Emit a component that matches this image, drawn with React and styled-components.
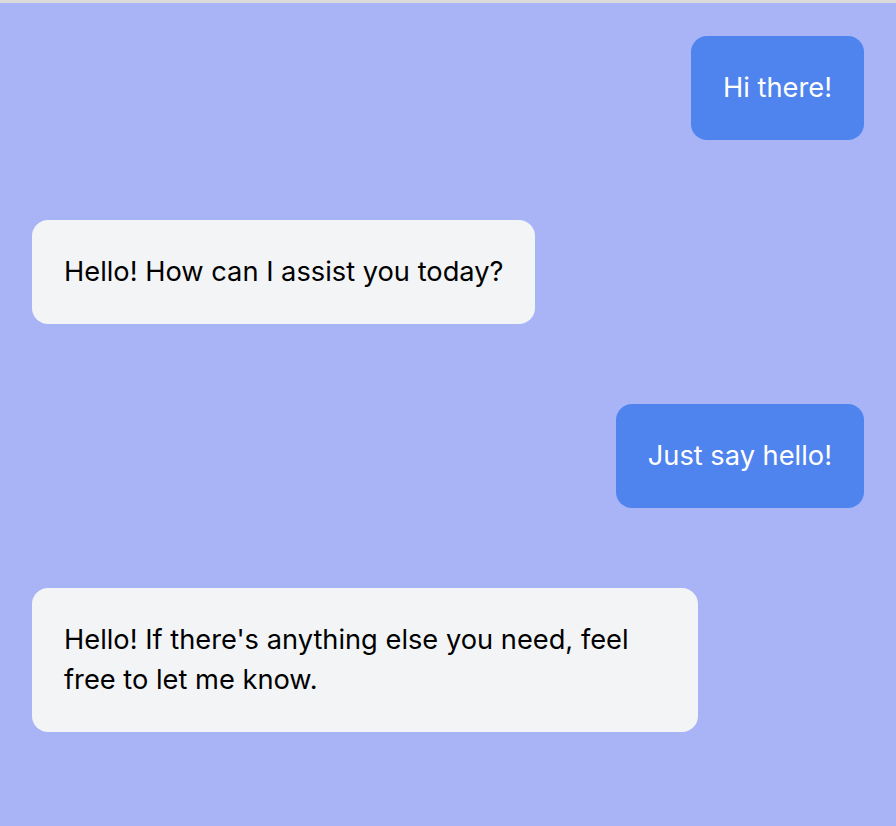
import React from 'react';
import styled, { createGlobalStyle } from 'styled-components';

const GlobalStyle = createGlobalStyle`
    html, body {
        margin: 0;
        padding: 0;
        background: #a8b4f6;
    }
    body {
        font-family: Inter, "Noto Sans", sans-serif;
    }
`

const Page = styled.div`
    min-height: 826px;
    box-sizing: border-box;
    border-top: 3px solid #dadada;
    background: #a8b4f6;
    padding: 33px 32px 32px;
    display: flex;
    flex-direction: column;
    gap: 80px;
`

const Row = styled.div`
    display: flex;
    justify-content: ${p => (p.$mine ? 'flex-end' : 'flex-start')};
`

const Bubble = styled.div`
    max-width: 80%;
    box-sizing: border-box;
    padding: 32px;
    border-radius: 16px;
    font-size: 27.25px;
    line-height: 40px;
    background: ${p => (p.$mine ? '#4f83ee' : '#f3f4f6')};
    color: ${p => (p.$mine ? '#ffffff' : '#000000')};
`

const messages = [
    { mine: true, text: 'Hi there!' },
    { mine: false, text: 'Hello! How can I assist you today?' },
    { mine: true, text: 'Just say hello!' },
    { mine: false, text: "Hello! If there's anything else you need, feel free to let me know." },
]

function App() {
  return (
    <>
        <GlobalStyle />
        <Page>
            {messages.map((m, i) => (
                <Row key={i} $mine={m.mine}>
                    <Bubble $mine={m.mine}>{m.text}</Bubble>
                </Row>
            ))}
        </Page>
    </>
  )
}

export default App
